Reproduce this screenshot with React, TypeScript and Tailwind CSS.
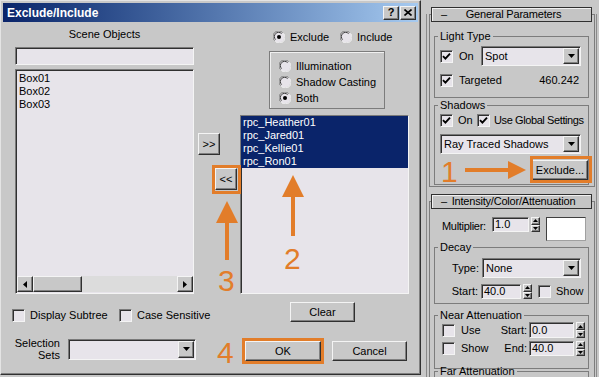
import type { ReactNode } from 'react'

const FIELD =
  'border border-t-[#7a7a7a] border-l-[#7a7a7a] border-b-[#f4f4f4] border-r-[#f4f4f4] shadow-[inset_1px_1px_0_#303030] bg-[#e7e4ea]'
const RAISED =
  'border border-t-[#f4f4f4] border-l-[#f4f4f4] border-r-[#303030] border-b-[#303030] shadow-[inset_-1px_-1px_0_#808080] bg-[#c8c8c8]'
const ORANGE = '#e27d2a'

function Check({ on }: { on?: boolean }) {
  return (
    <span className={`${FIELD} w-[13px] h-[13px] shrink-0 flex items-center justify-center`}>
      {on && (
        <svg width="9" height="9" viewBox="0 0 9 9">
          <path d="M1 4.2 L3.4 6.6 L8 1.6" stroke="#000" strokeWidth="1.9" fill="none" />
        </svg>
      )}
    </span>
  )
}

function Radio({ on }: { on?: boolean }) {
  return (
    <svg width="12" height="12" viewBox="0 0 12 12" className="shrink-0">
      <circle cx="6" cy="6" r="5.5" fill="#e7e4ea" />
      <path d="M1.6 9.6 A5.3 5.3 0 0 1 9.6 1.6" stroke="#7a7a7a" fill="none" />
      <path d="M2.6 8.6 A4.2 4.2 0 0 1 8.6 2.6" stroke="#404040" fill="none" />
      <path d="M2.4 10.4 A5.3 5.3 0 0 0 10.4 2.4" stroke="#f4f4f4" fill="none" />
      {on && <circle cx="6" cy="6" r="2" fill="#000" />}
    </svg>
  )
}

function Combo({ text, className }: { text?: string; className: string }) {
  return (
    <div className={`${FIELD} flex items-stretch ${className}`}>
      <span className="flex-1 pl-[3px] flex items-center whitespace-nowrap overflow-hidden">{text}</span>
      <span className={`${RAISED} w-[16px] m-[1px] flex items-center justify-center`}>
        <svg width="7" height="4" viewBox="0 0 7 4">
          <path d="M0 0h7L3.5 4z" fill="#000" />
        </svg>
      </span>
    </div>
  )
}

function Spin({ className }: { className: string }) {
  return (
    <div className={`flex flex-col ${className}`}>
      <span className={`${RAISED} flex-1 flex items-center justify-center`}>
        <svg width="5" height="3" viewBox="0 0 5 3">
          <path d="M0 3h5L2.5 0z" fill="#000" />
        </svg>
      </span>
      <span className={`${RAISED} flex-1 flex items-center justify-center`}>
        <svg width="5" height="3" viewBox="0 0 5 3">
          <path d="M0 0h5L2.5 3z" fill="#000" />
        </svg>
      </span>
    </div>
  )
}

function Group({ label, className, children }: { label: string; className: string; children: ReactNode }) {
  return (
    <fieldset className={`border border-[#7c7c7c] ${className}`}>
      <legend className="ml-[3px] px-[2px] leading-[13px]">{label}</legend>
      {children}
    </fieldset>
  )
}

function RolloutHeader({ title }: { title: string }) {
  return (
    <div className="relative -mt-[8px] ml-[1px] w-[161px] h-[15px] flex items-center justify-center border border-[#303030] shadow-[inset_1px_1px_0_#f0f0f0] bg-[#c4c4c4]">
      <span className="absolute left-[9px] top-0 leading-[13px]">–</span>
      <span className="ml-[4px] whitespace-nowrap tracking-[-0.2px]">{title}</span>
    </div>
  )
}

function Dialog() {
  return (
    <div className="w-[421px] h-[375px] shrink-0 flex flex-col bg-[#c8c8c8] border border-t-[#e4e4e4] border-l-[#e4e4e4] border-r-[#303030] border-b-[#303030] shadow-[inset_-1px_-1px_0_#808080]">
      <div className="mx-[2px] mt-[2px] h-[19px] flex items-center pl-[4px] pr-[2px] bg-linear-to-r from-[#0a246a] to-[#a6caf0]">
        <span className="flex-1 text-white font-bold text-[12px]">Exclude/Include</span>
        <span className={`${RAISED} w-[16px] h-[14px] flex items-center justify-center font-bold text-[11px] leading-none`}>?</span>
        <span className={`${RAISED} w-[16px] h-[14px] ml-[1px] flex items-center justify-center`}>
          <svg width="8" height="7" viewBox="0 0 8 7">
            <path d="M0.5 0.5L7.5 6.5M7.5 0.5L0.5 6.5" stroke="#000" strokeWidth="1.6" />
          </svg>
        </span>
      </div>

      <div className="flex flex-1">
        {/* left column */}
        <div className="ml-[11px] w-[184px] flex flex-col">
          <div className="mt-[6px] ml-[3px] w-[179px] h-[13px] leading-[13px] text-center">Scene Objects</div>
          <div className={`${FIELD} mt-[6px] ml-[3px] w-[179px] h-[18px]`} />
          <div className={`${FIELD} mt-[4px] ml-[3px] w-[179px] h-[225px] flex flex-col`}>
            <div className="flex-1 pt-[2px] pl-[3px] leading-[13px]">
              <div>Box01</div>
              <div>Box02</div>
              <div>Box03</div>
            </div>
            <div className="h-[16px] mb-[1px] ml-[1px] flex bg-[#dcdcdc]">
              <span className={`${RAISED} w-[16px] flex items-center justify-center`}>
                <svg width="4" height="7" viewBox="0 0 4 7">
                  <path d="M4 0v7L0 3.5z" fill="#000" />
                </svg>
              </span>
              <span className={`${RAISED} w-[49px]`} />
              <span className="flex-1" />
              <span className={`${RAISED} w-[16px] flex items-center justify-center`}>
                <svg width="4" height="7" viewBox="0 0 4 7">
                  <path d="M0 0v7L4 3.5z" fill="#000" />
                </svg>
              </span>
            </div>
          </div>
          <div className="mt-[15px] h-[13px] flex items-center whitespace-nowrap">
            <span className="w-[107px] shrink-0 flex items-center">
              <Check />
              <span className="ml-[5px]">Display Subtree</span>
            </span>
            <Check />
            <span className="ml-[5px]">Case Sensitive</span>
          </div>
          <div className="mt-[15px] flex items-center">
            <div className="w-[48px] text-right leading-[12px]">
              <div>Selection</div>
              <div>Sets</div>
            </div>
            <Combo className="ml-[8px] w-[128px] h-[21px]" />
          </div>
        </div>

        {/* middle buttons */}
        <div className="w-[44px] flex flex-col">
          <span className={`${RAISED} mt-[111px] ml-[2px] w-[22px] h-[22px] flex items-center justify-center`}>&gt;&gt;</span>
          <span className={`${RAISED} mt-[13px] ml-[19px] w-[22px] h-[22px] flex items-center justify-center`}>&lt;&lt;</span>
        </div>

        {/* right column */}
        <div className="w-[169px] flex flex-col">
          <div className="mt-[9px] h-[12px] pl-[33px] flex items-center">
            <span className="w-[67px] flex items-center">
              <Radio on />
              <span className="ml-[5px]">Exclude</span>
            </span>
            <Radio />
            <span className="ml-[5px]">Include</span>
          </div>
          <div className="mt-[8px] ml-[29px] w-[116px] h-[58px] border border-[#7c7c7c] shadow-[inset_1px_1px_0_#f0f0f0] pt-[6px] pl-[9px]">
            <div className="h-[16px] flex items-center">
              <Radio />
              <span className="ml-[5px]">Illumination</span>
            </div>
            <div className="h-[16px] flex items-center">
              <Radio />
              <span className="ml-[5px]">Shadow Casting</span>
            </div>
            <div className="h-[16px] flex items-center">
              <Radio on />
              <span className="ml-[5px]">Both</span>
            </div>
          </div>
          <div className={`${FIELD} mt-[6px] w-[169px] h-[179px] leading-[13px]`}>
            {['rpc_Heather01', 'rpc_Jared01', 'rpc_Kellie01', 'rpc_Ron01'].map((n) => (
              <div key={n} className="bg-[#0a246a] text-white pl-[2px]">
                {n}
              </div>
            ))}
          </div>
          <span className={`${RAISED} mt-[8px] ml-[50px] w-[65px] h-[20px] flex items-center justify-center`}>Clear</span>
          <div className="mt-[19px] flex">
            <span className={`${RAISED} ml-[5px] w-[76px] h-[20px] flex items-center justify-center`}>OK</span>
            <span className={`${RAISED} ml-[11px] w-[75px] h-[20px] flex items-center justify-center`}>Cancel</span>
          </div>
        </div>
      </div>
    </div>
  )
}

function Panel() {
  return (
    <div className="flex-1 pl-[5px] overflow-hidden">
      <div className="h-full w-[171px] border-l border-r border-[#8a8a8a] pl-[2px]">
        {/* General Parameters */}
        <div className="mt-[14px] w-[166px] border border-[#7c7c7c] pb-[1px]">
          <RolloutHeader title="General Parameters" />
          <Group label="Light Type" className="mt-[8px] ml-[4px] w-[155px] h-[68px]">
            <div className="mt-[3px] h-[20px] pl-[5px] flex items-center">
              <span className="w-[41px] flex items-center">
                <Check on />
                <span className="ml-[6px]">On</span>
              </span>
              <Combo text="Spot" className="w-[100px] h-[20px]" />
            </div>
            <div className="mt-[7px] h-[14px] pl-[5px] pr-[9px] flex items-center">
              <Check on />
              <span className="ml-[6px]">Targeted</span>
              <span className="ml-auto">460.242</span>
            </div>
          </Group>
          <Group label="Shadows" className="mt-[1px] ml-[4px] w-[155px] h-[86px]">
            <div className="mt-[2px] h-[13px] pl-[5px] flex items-center">
              <span className="w-[37px] flex items-center">
                <Check on />
                <span className="ml-[5px]">On</span>
              </span>
              <Check on />
              <span className="ml-[4px] whitespace-nowrap tracking-[-0.4px]">Use Global Settings</span>
            </div>
            <Combo text="Ray Traced Shadows" className="mt-[7px] ml-[5px] w-[141px] h-[20px]" />
            <span className={`${RAISED} mt-[6px] ml-[97px] w-[56px] h-[20px] flex items-center justify-center`}>Exclude...</span>
          </Group>
        </div>

        {/* Intensity/Color/Attenuation */}
        <div className="mt-[14px] w-[166px] h-[200px] border border-[#7c7c7c]">
          <RolloutHeader title="Intensity/Color/Attenuation" />
          <div className="mt-[8px] flex items-start">
            <span className="ml-[12px] w-[50px] mt-[1px] tracking-[-0.3px]">Multiplier:</span>
            <div className={`${FIELD} w-[37px] h-[15px] flex items-center pl-[2px] leading-none`}>1.0</div>
            <Spin className="ml-[2px] w-[9px] h-[15px]" />
            <div className="ml-[6px] w-[40px] h-[24px] bg-white border border-t-[#404040] border-l-[#404040] border-b-[#a0a0a0] border-r-[#a0a0a0]" />
          </div>
          <Group label="Decay" className="ml-[4px] w-[155px] h-[63px]">
            <div className="mt-[4px] h-[20px] flex items-center">
              <span className="w-[44px] text-right">Type:</span>
              <Combo text="None" className="ml-[3px] w-[99px] h-[20px]" />
            </div>
            <div className="mt-[6px] h-[15px] flex items-center">
              <span className="w-[43px] text-right">Start:</span>
              <div className={`${FIELD} ml-[3px] w-[40px] h-[15px] flex items-center pl-[2px]`}>40.0</div>
              <Spin className="ml-[2px] w-[9px] h-[15px]" />
              <span className="ml-[6px]">
                <Check />
              </span>
              <span className="ml-[5px]">Show</span>
            </div>
          </Group>
          <Group label="Near Attenuation" className="mt-[5px] ml-[4px] w-[155px] h-[60px]">
            <div className="h-[16px] pl-[7px] pr-[3px] flex items-center">
              <Check />
              <span className="ml-[6px]">Use</span>
              <span className="ml-auto">Start:</span>
              <div className={`${FIELD} ml-[2px] w-[45px] h-[16px] flex items-center pl-[2px]`}>0.0</div>
              <Spin className="ml-[2px] w-[9px] h-[16px]" />
            </div>
            <div className="mt-[3px] h-[15px] pl-[7px] pr-[3px] flex items-center">
              <Check />
              <span className="ml-[6px]">Show</span>
              <span className="ml-auto">End:</span>
              <div className={`${FIELD} ml-[2px] w-[45px] h-[15px] flex items-center pl-[2px]`}>40.0</div>
              <Spin className="ml-[2px] w-[9px] h-[15px]" />
            </div>
          </Group>
          <Group label="Far Attenuation" className="-mt-[4px] ml-[4px] w-[155px] h-[40px]">
            <div />
          </Group>
        </div>
      </div>
    </div>
  )
}

function Annotations() {
  return (
    <>
      <svg className="absolute left-0 top-0 pointer-events-none" width="599" height="377" viewBox="0 0 599 377">
        <g fill="none" stroke={ORANGE} strokeWidth="3">
          <rect x="531.5" y="157.5" width="59" height="24" />
          <rect x="213.5" y="166.5" width="26" height="26" />
          <rect x="243.5" y="339.5" width="79" height="23" />
        </g>
        <g fill={ORANGE}>
          <rect x="465" y="168" width="45" height="4" />
          <polygon points="508,161 526,170 508,179" />
          <rect x="291" y="195" width="4" height="41" />
          <polygon points="282,197 293,175 304,197" />
          <rect x="225" y="221" width="4" height="39" />
          <polygon points="216,223 227,201 238,223" />
        </g>
      </svg>
      <span className="absolute left-[441px] top-[157px] text-[30px] leading-[30px] text-[#e27d2a]">1</span>
      <span className="absolute left-[284px] top-[244px] text-[30px] leading-[30px] text-[#e27d2a]">2</span>
      <span className="absolute left-[218px] top-[266px] text-[30px] leading-[30px] text-[#e27d2a]">3</span>
      <span className="absolute left-[217px] top-[338px] text-[30px] leading-[30px] text-[#e27d2a]">4</span>
    </>
  )
}

export default function App() {
  return (
    <div className="relative flex w-[599px] h-[377px] overflow-hidden bg-[#c8c8c8] text-black text-[11px] font-['Liberation_Sans',Arial,sans-serif]">
      <Dialog />
      <Panel />
      <Annotations />
    </div>
  )
}
